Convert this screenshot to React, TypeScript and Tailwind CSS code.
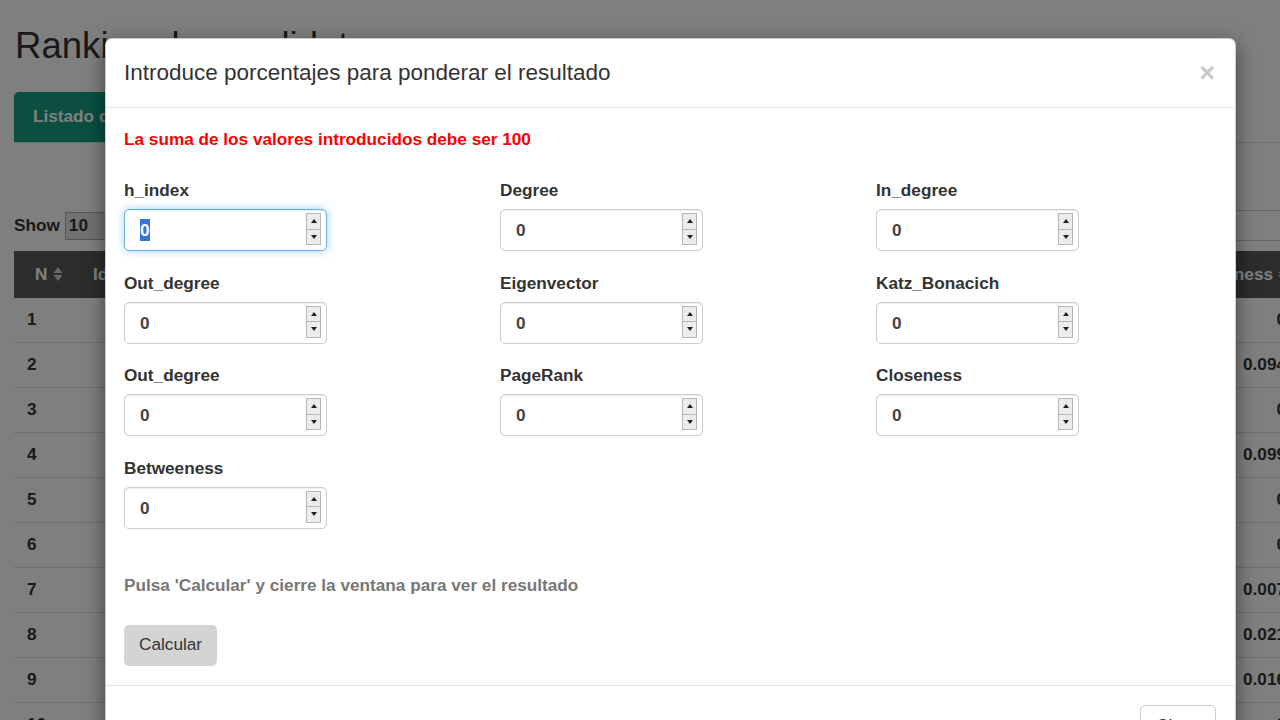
import React from "react";

const fields = [
  "h_index",
  "Degree",
  "In_degree",
  "Out_degree",
  "Eigenvector",
  "Katz_Bonacich",
  "Out_degree",
  "PageRank",
  "Closeness",
  "Betweeness",
];

const lastCol = ["0", "0.094", "0", "0.099", "0", "0", "0.007", "0.021", "0.016", "0"];

const SortIcon = () => (
  <svg width="10" height="16" viewBox="0 0 10 16" className="fill-current">
    <path d="M5 1 L9.5 7 L0.5 7 Z" />
    <path d="M5 15 L9.5 9 L0.5 9 Z" />
  </svg>
);

const Spinner = () => (
  <div className="absolute right-[5px] top-[3px] flex h-[32px] w-[15px] flex-col border border-[#b8b8b8] bg-[#ececec]">
    <div className="flex flex-1 items-center justify-center border-b border-[#b8b8b8]">
      <svg width="6" height="4" viewBox="0 0 6 4">
        <path d="M3 0 L6 4 L0 4 Z" fill="#222" />
      </svg>
    </div>
    <div className="flex flex-1 items-center justify-center">
      <svg width="6" height="4" viewBox="0 0 6 4">
        <path d="M0 0 L6 0 L3 4 Z" fill="#222" />
      </svg>
    </div>
  </div>
);

const NumberBox = ({ focused }: { focused?: boolean }) => (
  <div
    className={
      focused
        ? "relative flex h-[42px] w-[203px] items-center rounded-[5px] border border-[#66afe9] pl-[15px] shadow-[inset_0_1px_1px_rgba(0,0,0,0.075),0_0_8px_rgba(102,175,233,0.6)]"
        : "relative flex h-[42px] w-[203px] items-center rounded-[5px] border border-[#ccc] pl-[15px] shadow-[inset_0_1px_1px_rgba(0,0,0,0.075)]"
    }
  >
    {focused ? (
      <span className="bg-[#3875d7] text-[17.2px] font-bold leading-[22px] text-white">0</span>
    ) : (
      <span className="text-[17.2px] font-bold leading-[22px] text-[#444]">0</span>
    )}
    <Spinner />
  </div>
);

const Page = () => (
  <div className="w-[1310px] px-[14px]">
    <h1 className="pl-[1px] pt-[26px] text-[36.6px] leading-[40px] text-[#333]">Ranking de candidatos</h1>

    <div className="mt-[26px] flex border-b border-[#ddd]">
      <div className="flex h-[50px] items-center rounded-t-[5px] bg-[#149f80] px-[19px] text-[17.2px] font-bold text-white">
        Listado de candidatos
      </div>
    </div>

    <div className="mt-[67px] flex items-center justify-between">
      <div className="flex items-center gap-[5px] text-[17.2px] font-bold">
        <span>Show</span>
        <span className="flex h-[28px] w-[60px] items-center border border-[#aaa] bg-[#e3e3e3] px-[3px]">10</span>
        <span>entries</span>
      </div>
      <div className="mr-[-30px] flex items-center gap-[6px] text-[17.2px] font-bold">
        <span>Search:</span>
        <span className="h-[31px] w-[220px] border border-[#ccc]" />
      </div>
    </div>

    <div className="mt-[10px] text-[17.2px] font-bold">
      <div className="flex h-[47px] items-center bg-[#585858] text-white">
        <div className="flex w-[79px] items-center gap-[6px] pl-[21px]">
          N
          <span className="text-[#d0d0d0]">
            <SortIcon />
          </span>
        </div>
        <div className="flex-1">Id</div>
        <div className="flex items-center gap-[5px] pr-[8px]">
          Betweeness
          <span className="text-[#d0d0d0]">
            <SortIcon />
          </span>
        </div>
      </div>
      {lastCol.map((v, i) => (
        <div key={i} className="flex h-[45px] items-center border-b border-[#ddd]">
          <div className="w-[79px] pl-[13px]">{i + 1}</div>
          <div className="flex-1" />
          <div className="pr-[10px]">{v}</div>
        </div>
      ))}
    </div>
  </div>
);

const Modal = () => (
  <div className="absolute left-[105px] top-[38px] w-[1131px] rounded-[7px] border border-black/20 bg-white shadow-[0_6px_19px_rgba(0,0,0,0.5)]">
    <div className="flex items-center justify-between border-b border-[#e5e5e5] px-[18px] py-[18px]">
      <h4 className="text-[22.5px] leading-[32px] text-[#333]">
        Introduce porcentajes para ponderar el resultado
      </h4>
      <span className="mr-[2px] text-[27px] font-bold leading-none text-[#c9c9c9]">×</span>
    </div>

    <div className="px-[18px] pb-[19px] pt-[19px]">
      <p className="text-[17.2px] font-bold leading-[25px] text-[#f00]">
        La suma de los valores introducidos debe ser 100
      </p>

      <div className="mt-[26px] grid grid-cols-3 gap-x-[35px] gap-y-[19.5px]">
        {fields.map((f, i) => (
          <div key={i}>
            <label className="mb-[6px] block text-[17.2px] font-bold leading-[25px] text-[#333]">{f}</label>
            <NumberBox focused={i === 0} />
          </div>
        ))}
      </div>

      <p className="mt-[44px] text-[17.2px] font-bold leading-[25px] text-[#777]">
        Pulsa 'Calcular' y cierre la ventana para ver el resultado
      </p>

      <button className="mt-[27px] h-[41px] rounded-[5px] bg-[#d4d4d4] px-[15px] text-[17.2px] text-[#333]">
        Calcular
      </button>
    </div>

    <div className="flex justify-end border-t border-[#e5e5e5] p-[19px]">
      <button className="h-[42px] rounded-[5px] border border-[#ccc] bg-white px-[15px] text-[17.2px] text-[#333]">
        Close
      </button>
    </div>
  </div>
);

export default function App() {
  return (
    <div className="relative h-[720px] w-[1280px] overflow-hidden bg-white font-['Liberation_Sans',Arial,sans-serif] text-[#333]">
      <Page />
      <div className="absolute inset-0 bg-black/50" />
      <Modal />
    </div>
  );
}
